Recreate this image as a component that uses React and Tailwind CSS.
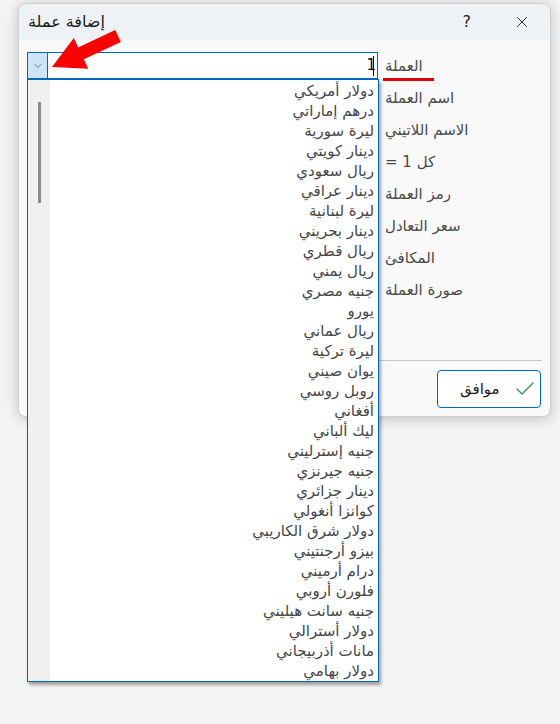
import { Check, X, ChevronDown } from "lucide-react"

const currencies = [
  "دولار أمريكي",
  "درهم إماراتي",
  "ليرة سورية",
  "دينار كويتي",
  "ريال سعودي",
  "دينار عراقي",
  "ليرة لبنانية",
  "دينار بحريني",
  "ريال قطري",
  "ريال يمني",
  "جنيه مصري",
  "يورو",
  "ريال عماني",
  "ليرة تركية",
  "يوان صيني",
  "روبل روسي",
  "أفغاني",
  "ليك ألباني",
  "جنيه إسترليني",
  "جنيه جيرنزي",
  "دينار جزائري",
  "كوانزا أنغولي",
  "دولار شرق الكاريبي",
  "بيزو أرجنتيني",
  "درام أرميني",
  "فلورن أروبي",
  "جنيه سانت هيليني",
  "دولار أسترالي",
  "مانات أذربيجاني",
  "دولار بهامي",
]

const labels = [
  "اسم العملة",
  "الاسم اللاتيني",
  "كل 1 =",
  "رمز العملة",
  "سعر التعادل",
  "المكافئ",
  "صورة العملة",
]

function Row({ index, children }) {
  return (
    <div className="flex h-8 items-center">
      <div className="w-[351px] h-[26px] shrink-0">
        {index < 2 && <div className="h-full w-full border border-[#c4c4c4] bg-white" />}
      </div>
      <span dir="rtl" className="ml-[7px] text-[15px] text-[#4a4a4a]">
        {children}
      </span>
    </div>
  )
}

export default function App() {
  return (
    <div className="relative min-h-[724px] bg-[#f4f4f4] pt-[3px] pl-[18px] font-['DejaVu_Sans',sans-serif]">
      {/* dialog */}
      <div className="w-[533px] h-[414px] flex flex-col rounded-lg border border-[#cfcfcf] bg-[#f9f9f9] shadow-[0_2px_14px_rgba(0,0,0,0.22)] overflow-hidden">
        <div className="h-[36px] shrink-0 flex items-center bg-[#eef2f5]">
          <span dir="rtl" className="pl-[9px] text-[16px] text-[#1b1b1b]">إضافة عملة</span>
          <span className="ml-auto mr-[42px] text-[16px] text-[#1b1b1b]">?</span>
          <X className="mr-[19px] w-[18px] h-[18px] text-[#1b1b1b]" strokeWidth={1.2} />
        </div>

        <div className="flex flex-col pt-[10px]">
          {/* first row: combo + label */}
          <div className="flex h-8 items-center pl-2">
            <div className="w-[351px] h-[28px] shrink-0 flex border border-[#0067c0] border-b-2 bg-white">
              <div className="w-[20px] h-full flex items-center justify-center bg-[#cce4f7] border-r border-[#0067c0]">
                <ChevronDown className="w-[12px] h-[12px] text-[#444]" strokeWidth={1.3} />
              </div>
              <div className="flex-1 flex items-center justify-end pr-[3px]">
                <span className="text-[15px] text-black leading-none">1</span>
                <span className="w-px h-[20px] bg-black -ml-[3px]" />
              </div>
            </div>
            <span dir="rtl" className="ml-[5px] w-[51px] pl-[2px] text-[15px] leading-4 text-[#4a4a4a] text-left pb-[4px] border-b-[3px] border-[#e60000] -mb-[7px]">
              العملة
            </span>
          </div>
          <div className="pl-2">
            {labels.map((l, i) => (
              <Row key={l} index={i}>{l}</Row>
            ))}
          </div>
          <div className="mx-2 mt-[54px] h-px bg-[#c8c8c8]" />
          <div className="flex justify-end mt-[9px] mr-[9px]">
            <button className="w-[104px] h-[38px] flex items-center rounded border border-[#0067c0] bg-white">
              <span dir="rtl" className="ml-[22px] text-[15px] text-[#1b1b1b]">موافق</span>
              <Check className="ml-auto mr-[3px] w-[24px] h-[24px] text-[#2e9b45]" strokeWidth={1.4} />
            </button>
          </div>
        </div>
      </div>

      {/* open dropdown list */}
      <div className="absolute left-[27px] top-[79px] w-[352px] h-[603px] flex border border-[#0067c0] bg-white shadow-[2px_3px_3px_rgba(0,0,0,0.35)] overflow-hidden">
        <div className="w-[22px] shrink-0 bg-[#f0f0f0] pl-[10px] pt-[22px]">
          <div className="w-[3px] h-[101px] bg-[#8a8a8a]" />
        </div>
        <div className="flex-1 flex flex-col pt-px pr-[4px]">
          {currencies.map((c) => (
            <div key={c} dir="rtl" className="h-5 shrink-0 flex items-center text-[15px] text-[#454545]">
              {c}
            </div>
          ))}
        </div>
      </div>

      {/* red annotation arrow */}
      <svg className="absolute left-0 top-0" width="140" height="80" viewBox="0 0 140 80">
        <polygon
          points="115.2,30.1 120.8,41.9 83.8,59.3 88.2,68.8 52,67 73.8,38 78.2,47.5"
          fill="#ff0000"
        />
      </svg>
    </div>
  )
}
